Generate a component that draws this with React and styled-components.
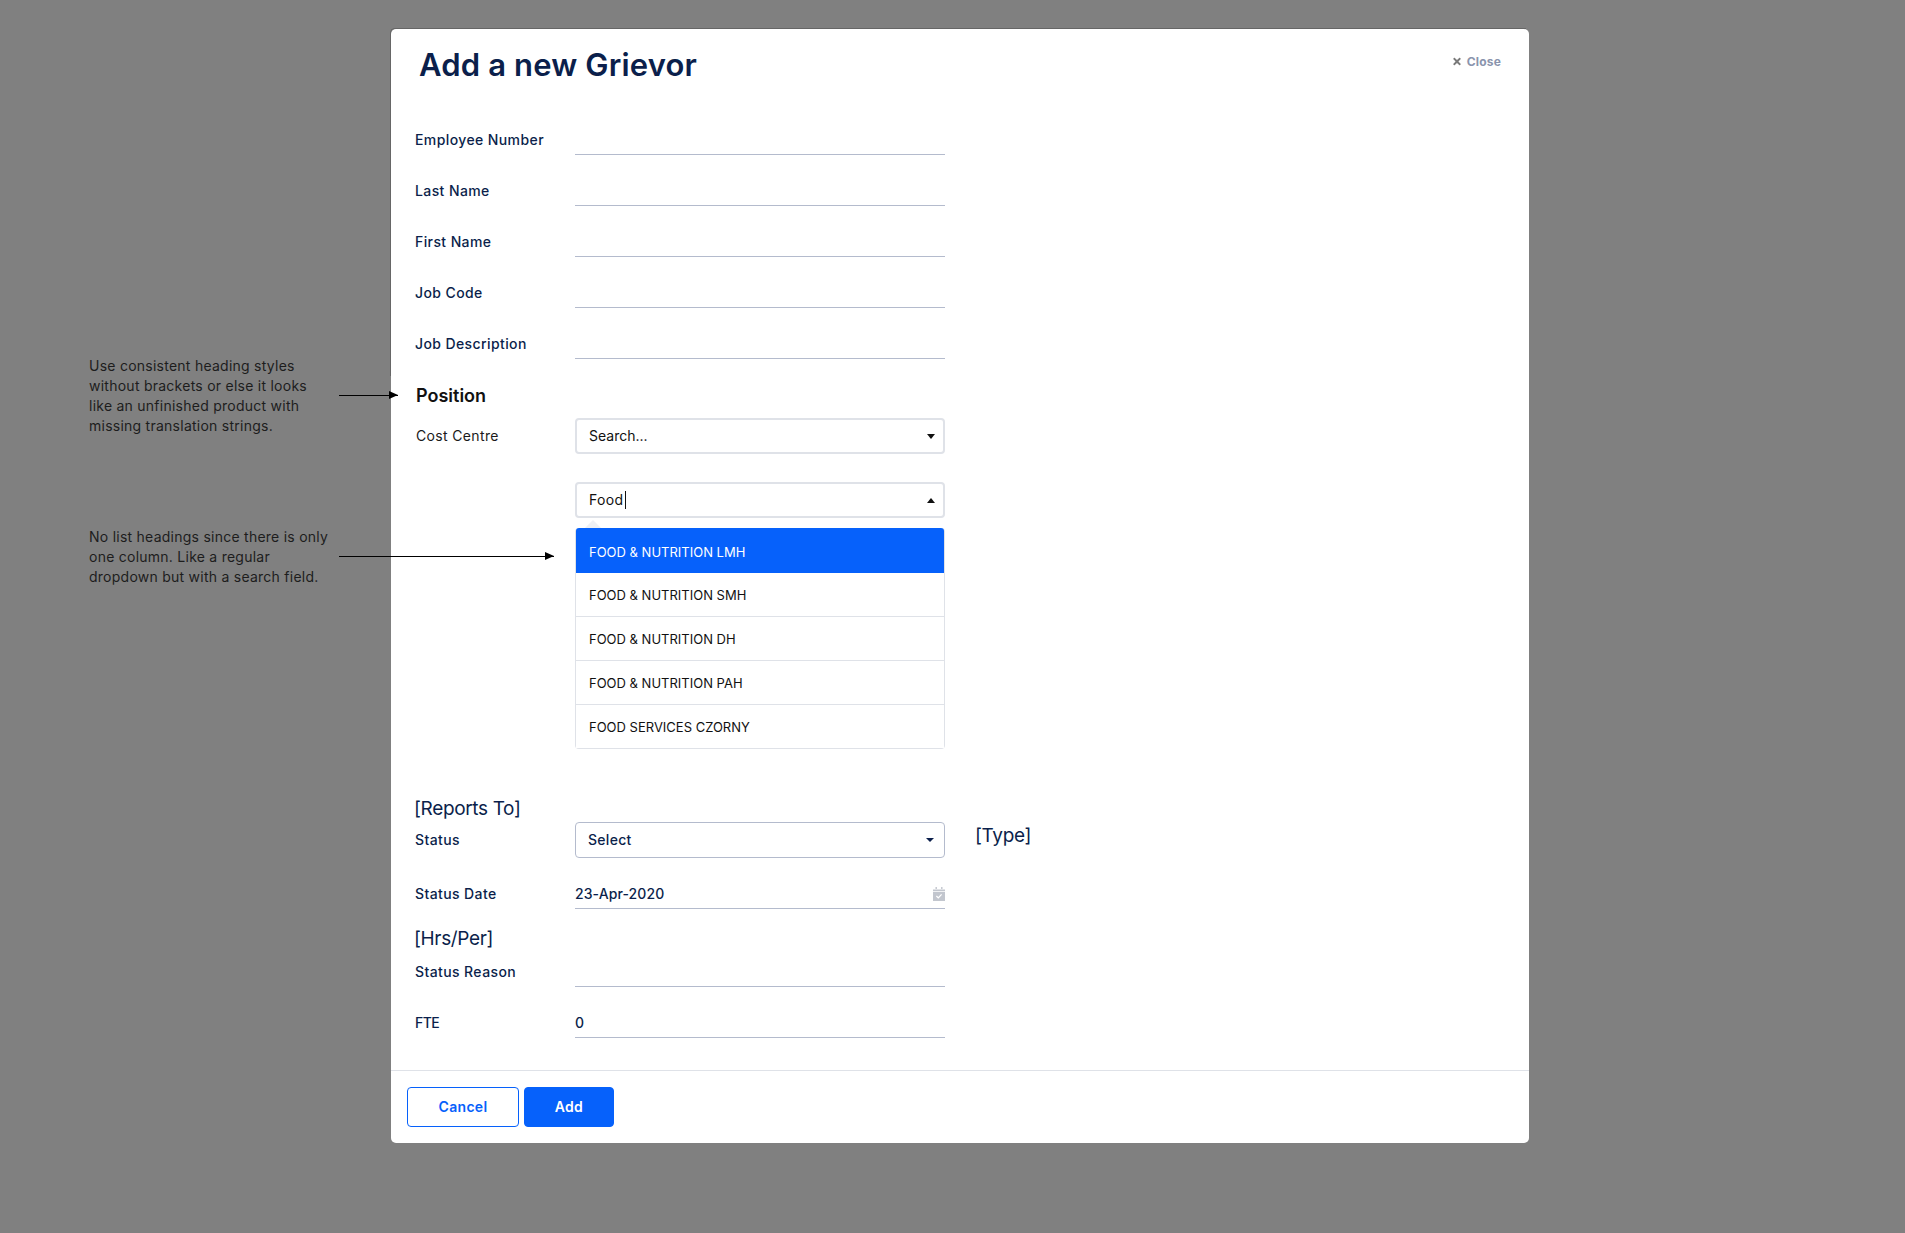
import React from 'react'
import styled, { createGlobalStyle } from 'styled-components'
import { FaTimes } from 'react-icons/fa'

const colors = {
    navy: '#0b1f4b',
    blue: '#0661fb',
    line: '#b4bbcd',
    soft: '#dfe2e8',
}

const GlobalStyle = createGlobalStyle`
    html, body {
        margin: 0;
        padding: 0;
        background: #808080;
        font-family: Inter, "Noto Sans", sans-serif;
    }
`

const textFields = ['Employee Number', 'Last Name', 'First Name', 'Job Code', 'Job Description']
const options = ['FOOD & NUTRITION SMH', 'FOOD & NUTRITION DH', 'FOOD & NUTRITION PAH', 'FOOD SERVICES CZORNY']

function Field({ label, value = '', short, tight, children }) {
    return (
        <FieldRow $short={short}>
            <Label $tight={tight}>{label}</Label>
            <UnderlineBox>
                <UnderlineInput readOnly value={value} aria-label={label} />
                {children}
            </UnderlineBox>
        </FieldRow>
    )
}

function CalendarIcon() {
    return (
        <CalendarSvg viewBox="0 0 12 14" aria-hidden="true">
            <path d="M2.5 0h1.4v2H2.5zM8.1 0h1.4v2H8.1zM0 2.6h12V4H0zM0 4.8h12V14H0z" fill="#c2c6ce" />
            <path d="M3.4 9l1.9 1.9 3.3-3.5" stroke="#fff" strokeWidth="1.3" fill="none" />
        </CalendarSvg>
    )
}

export default function App() {
    return (
        <Page>
            <GlobalStyle />
            <Note $top={356}>
                Use consistent heading styles<br />
                without brackets or else it looks<br />
                like an unfinished product with<br />
                missing translation strings.
            </Note>
            <Note $top={527}>
                No list headings since there is only<br />
                one column. Like a regular<br />
                dropdown but with a search field.
            </Note>

            <Modal>
                <Header>
                    <Title>Add a new Grievor</Title>
                    <CloseButton><FaTimes />Close</CloseButton>
                </Header>

                <Body>
                    {textFields.map(label => <Field key={label} label={label} />)}

                    <Heading>Position</Heading>
                    <PickerRow>
                        <PlainLabel>Cost Centre</PlainLabel>
                        <Picker>
                            <PickerText $tight>Search...</PickerText>
                            <Triangle />
                        </Picker>
                    </PickerRow>
                    <PickerRow $gap={28}>
                        <span />
                        <Picker>
                            <PickerText>Food<Caret /></PickerText>
                            <Triangle $up />
                        </Picker>
                    </PickerRow>
                    <PickerRow $gap={10}>
                        <span />
                        <Dropdown>
                            <Option $active>FOOD &amp; NUTRITION LMH</Option>
                            {options.map(option => <Option key={option}>{option}</Option>)}
                        </Dropdown>
                    </PickerRow>

                    <BracketHeading $gap={47}>[Reports To]</BracketHeading>
                    <PickerRow>
                        <Label>Status</Label>
                        <Picker $dark>
                            <PickerText $dark>Select</PickerText>
                            <Triangle $small />
                        </Picker>
                        <TypeHeading>[Type]</TypeHeading>
                    </PickerRow>
                    <Field label="Status Date" value="23-Apr-2020"><CalendarIcon /></Field>
                    <BracketHeading $gap={17}>[Hrs/Per]</BracketHeading>
                    <Field label="Status Reason" short />
                    <Field label="FTE" value="0" tight />
                </Body>

                <Footer>
                    <CancelButton>Cancel</CancelButton>
                    <AddButton>Add</AddButton>
                </Footer>
            </Modal>

            <Arrow $top={395} $left={339} $width={59} />
            <Arrow $top={556} $left={339} $width={215} />
        </Page>
    )
}

const Page = styled.div`
    position: relative;
    height: 1233px;
    padding: 29px 0 0 391px;
    box-sizing: border-box;
    overflow: hidden;
`

const Note = styled.p`
    position: absolute;
    top: ${p => p.$top}px;
    left: 89px;
    margin: 0;
    font-size: 14px;
    line-height: 20px;
    color: #1d1d1d;
    letter-spacing: 0.25px;
    white-space: nowrap;
`

const Arrow = styled.div`
    position: absolute;
    top: ${p => p.$top}px;
    left: ${p => p.$left}px;
    width: ${p => p.$width}px;
    height: 1px;
    background: #000;
    &::after {
        content: '';
        position: absolute;
        right: 0;
        top: -4px;
        border-left: 9px solid #000;
        border-top: 4.5px solid transparent;
        border-bottom: 4.5px solid transparent;
    }
`

const Modal = styled.div`
    position: relative;
    width: 1138px;
    height: 1114px;
    background: #fff;
    border-radius: 5px;
    display: flex;
    flex-direction: column;
    &::before {
        content: '';
        position: absolute;
        top: -1px;
        left: -1px;
        right: 3px;
        height: 347px;
        border-top: 1px solid #666;
        border-left: 1px solid #666;
        border-top-left-radius: 5px;
        pointer-events: none;
    }
`

const Header = styled.div`
    display: flex;
    justify-content: space-between;
    height: 75px;
    padding: 16px 28px 0;
    box-sizing: border-box;
`

const Title = styled.h1`
    margin: 0;
    font-size: 31px;
    line-height: 40px;
    font-weight: 600;
    color: ${colors.navy};
    letter-spacing: 0.15px;
`

const CloseButton = styled.button`
    display: flex;
    align-items: center;
    gap: 5px;
    height: 32px;
    padding: 0;
    border: 0;
    background: none;
    font: 700 12px Inter, sans-serif;
    letter-spacing: 0.2px;
    color: #8a94ad;
    & svg {
        width: 10px;
        height: 11px;
        color: #7a7a7a;
    }
`

const Body = styled.div`
    flex: 1;
    padding-left: 24px;
`

const FieldRow = styled.div`
    display: grid;
    grid-template-columns: 160px 370px;
    align-items: end;
    height: ${p => (p.$short ? 35 : 51)}px;
`

const Label = styled.label`
    font-size: 14px;
    line-height: 20px;
    padding-bottom: 5px;
    font-weight: 500;
    color: ${colors.navy};
    letter-spacing: ${p => (p.$tight ? '-0.6px' : '0.4px')};
`

const PlainLabel = styled.label`
    font-size: 14px;
    line-height: 20px;
    margin-left: 1px;
    color: #1a1a1a;
    letter-spacing: 0.35px;
`

const UnderlineBox = styled.div`
    display: flex;
    align-items: center;
    height: 34px;
    padding-top: 4px;
    box-sizing: border-box;
    border-bottom: 1px solid ${colors.line};
`

const UnderlineInput = styled.input`
    flex: 1;
    min-width: 0;
    height: 100%;
    padding: 0;
    border: 0;
    outline: 0;
    background: none;
    font: 500 14px Inter, sans-serif;
    letter-spacing: 0.1px;
    color: ${colors.navy};
`

const CalendarSvg = styled.svg`
    width: 12px;
    height: 14px;
`

const Heading = styled.h2`
    margin: 23px 0 8px 1px;
    font-size: 18px;
    line-height: 28px;
    font-weight: 600;
    color: #111;
`

const BracketHeading = styled.h3`
    margin: ${p => p.$gap}px 0 0 -1px;
    font-size: 19px;
    line-height: 26px;
    font-weight: 400;
    letter-spacing: -0.35px;
    color: ${colors.navy};
`

const TypeHeading = styled(BracketHeading)`
    margin: -8px 0 0 30px;
`

const PickerRow = styled.div`
    display: grid;
    grid-template-columns: 160px 370px auto;
    align-items: center;
    justify-content: start;
    margin-top: ${p => p.$gap || 0}px;
    & > label {
        padding-bottom: 0;
    }
`

const Picker = styled.div`
    display: flex;
    align-items: center;
    justify-content: space-between;
    height: 36px;
    padding: ${p => (p.$dark ? '0 10px 0 12px' : '0 8px 0 12px')};
    box-sizing: border-box;
    background: #fff;
    border: ${p => (p.$dark ? `1px solid ${colors.line}` : `2px solid ${colors.soft}`)};
    border-radius: 4px;
`

const Triangle = styled.i`
    width: 0;
    height: 0;
    border-left: ${p => (p.$small ? 4 : 4.5)}px solid transparent;
    border-right: ${p => (p.$small ? 4 : 4.5)}px solid transparent;
    ${p => (p.$up ? 'border-bottom' : 'border-top')}: ${p => (p.$small ? 4 : 5)}px solid ${p => (p.$small ? colors.navy : '#111')};
`

const PickerText = styled.span`
    display: flex;
    align-items: center;
    padding-bottom: 1px;
    font-size: 14px;
    letter-spacing: ${p => (p.$tight ? '0' : '0.3px')};
    font-weight: ${p => (p.$dark ? 500 : 400)};
    color: ${p => (p.$dark ? colors.navy : '#111')};
`

const Caret = styled.i`
    width: 1px;
    height: 18px;
    margin-left: 2px;
    background: #111;
`

const Dropdown = styled.div`
    position: relative;
    height: 221px;
    box-sizing: border-box;
    background: #fff;
    border: 1px solid ${colors.soft};
    border-top: 0;
    border-radius: 4px;
    &::before {
        content: '';
        position: absolute;
        top: -8px;
        left: 9px;
        border-left: 8px solid transparent;
        border-right: 8px solid transparent;
        border-bottom: 8px solid #eef0f4;
    }
`

const Option = styled.div`
    display: flex;
    align-items: center;
    height: ${p => (p.$active ? 45 : 44)}px;
    padding: ${p => (p.$active ? '3px 0 0 13px' : '1px 0 0 13px')};
    box-sizing: border-box;
    font-size: 13px;
    color: ${p => (p.$active ? '#fff' : '#111')};
    background: ${p => (p.$active ? colors.blue : '#fff')};
    border-radius: ${p => (p.$active ? '3px 3px 0 0' : 0)};
    border-bottom: 1px solid ${p => (p.$active ? colors.blue : colors.soft)};
    &:last-child {
        height: 43px;
        border-bottom: 0;
    }
`

const Footer = styled.div`
    display: flex;
    gap: 5px;
    padding: 16px;
    border-top: 1px solid ${colors.soft};
`

const CancelButton = styled.button`
    width: 112px;
    height: 40px;
    padding: 0 0 2px;
    background: #fff;
    border: 1px solid ${colors.blue};
    border-radius: 4px;
    font: 600 14px Inter, sans-serif;
    letter-spacing: 0.3px;
    color: ${colors.blue};
`

const AddButton = styled(CancelButton)`
    width: 90px;
    background: ${colors.blue};
    color: #fff;
`
